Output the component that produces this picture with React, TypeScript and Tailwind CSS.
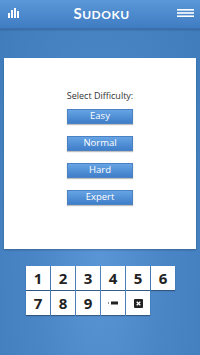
import React from "react";

const Tile = ({ children }: { children: React.ReactNode }) => (
  <div className="w-[24px] h-[24px] bg-white flex items-center justify-center text-[15px] font-bold text-[#222] shadow-[0_1px_1px_rgba(0,0,0,0.35)]">
    {children}
  </div>
);

const Btn = ({ label }: { label: string }) => (
  <div className="w-[66px] h-[15px] flex items-center justify-center text-[9.5px] text-white bg-gradient-to-b from-[#66a4e4] to-[#3f7ec9] border border-[#4a82c4] shadow-[0_1px_1px_rgba(0,0,0,0.25)]">
    {label}
  </div>
);

export default function App() {
  return (
    <div
      className="w-[200px] h-[355px] flex flex-col overflow-hidden bg-[radial-gradient(ellipse_at_50%_75%,#5a96d6_0%,#4a86c6_45%,#3f7bbb_100%)]"
      style={{ fontFamily: '"Open Sans", "Noto Sans", sans-serif' }}
    >
      <div className="h-[29px] shrink-0 flex items-center justify-between px-[8px] bg-gradient-to-b from-[#5b98d8] to-[#3f7cc2] border-b border-[#3a70ae] shadow-[0_1px_2px_rgba(0,0,0,0.2)]">
        <svg width="12" height="10" viewBox="0 0 12 10" className="mt-[-2px]">
          <rect x="0" y="5" width="2" height="5" fill="white" />
          <rect x="3" y="2" width="2" height="8" fill="white" />
          <rect x="6" y="0" width="2" height="10" fill="white" />
          <rect x="9" y="3" width="2" height="7" fill="white" />
        </svg>
        <div className="text-white font-bold tracking-[0.5px] mt-[-3px] ml-[6px]" style={{ fontFamily: '"Lato", "Open Sans", sans-serif' }}>
          <span className="text-[15px]">S</span>
          <span className="text-[12px]">UDOKU</span>
        </div>
        <svg width="17" height="8" viewBox="0 0 17 8" className="mt-[-3px] mr-[-2px]">
          <rect x="0" y="0" width="17" height="1.6" fill="white" />
          <rect x="0" y="3.2" width="17" height="1.6" fill="white" />
          <rect x="0" y="6.4" width="17" height="1.6" fill="white" />
        </svg>
      </div>
      <div className="mt-[29px] mx-[4px] h-[191px] bg-white flex flex-col items-center shadow-[0_1px_2px_rgba(0,0,0,0.25)]">
        <div className="mt-[31px] text-[9px] text-[#333]">Select Difficulty:</div>
        <div className="mt-[6px] flex flex-col gap-[12px]">
          <Btn label="Easy" />
          <Btn label="Normal" />
          <Btn label="Hard" />
          <Btn label="Expert" />
        </div>
      </div>
      <div className="mt-[17px] ml-[26px] grid grid-cols-[repeat(6,24px)] gap-[1px]">
        <Tile>1</Tile>
        <Tile>2</Tile>
        <Tile>3</Tile>
        <Tile>4</Tile>
        <Tile>5</Tile>
        <Tile>6</Tile>
        <Tile>7</Tile>
        <Tile>8</Tile>
        <Tile>9</Tile>
        <Tile>
          <svg width="10" height="4" viewBox="0 0 10 4">
            <rect x="0" y="1.5" width="1" height="1" fill="#222" />
            <rect x="3" y="0.5" width="7" height="3" fill="#222" />
          </svg>
        </Tile>
        <Tile>
          <svg width="9" height="9" viewBox="0 0 9 9">
            <rect x="0" y="0" width="9" height="9" rx="1" fill="#222" />
            <path d="M2.7 2.7 L6.3 6.3 M6.3 2.7 L2.7 6.3" stroke="white" strokeWidth="1.3" />
          </svg>
        </Tile>
      </div>
    </div>
  );
}
